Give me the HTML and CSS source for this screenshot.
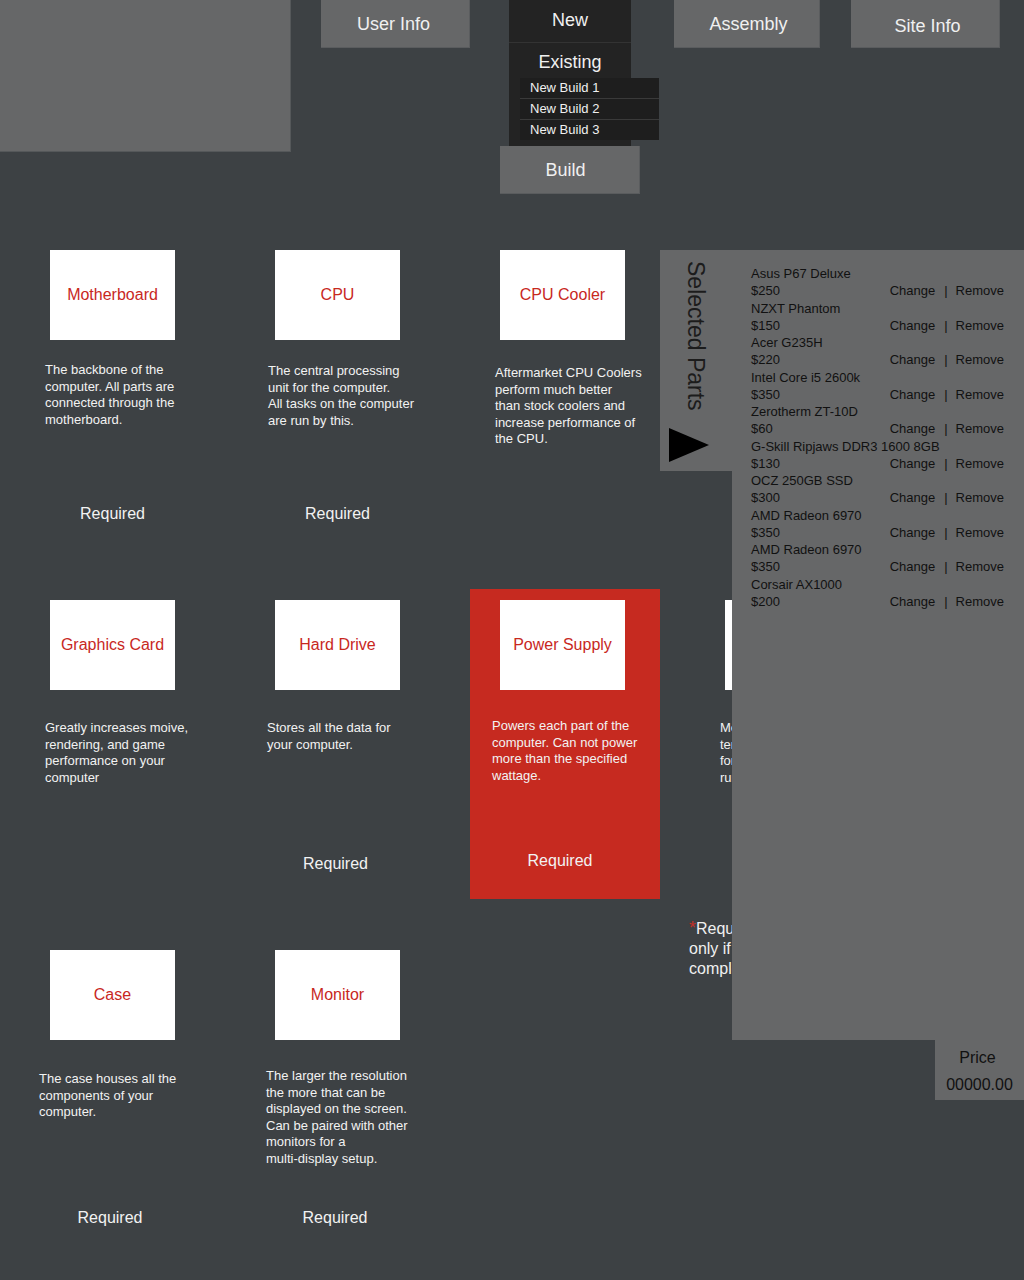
FILE: index.html
```html
<!DOCTYPE html>
<html lang="en">
<head>
<meta charset="utf-8">
<title>PC Builder</title>
<link rel="stylesheet" href="styles.css">
</head>
<body>
<header class="top">
  <div class="brand"></div>
  <div class="nav nav-user">User Info</div>
  <div class="menu">
    <div class="dd">
      <div class="dd-item dd-new">New</div>
      <div class="dd-item dd-existing">Existing</div>
      <ul class="submenu">
        <li>New Build 1</li>
        <li>New Build 2</li>
        <li>New Build 3</li>
      </ul>
    </div>
    <div class="nav nav-build">Build</div>
  </div>
  <div class="nav nav-assembly">Assembly</div>
  <div class="nav nav-site">Site Info</div>
</header>

<main class="parts-grid">
  <div class="item row1">
    <div class="tile">Motherboard</div>
    <p class="desc">The backbone of the<br>computer. All parts are<br>connected through the<br>motherboard.</p>
    <div class="req">Required</div>
  </div>
  <div class="item row1">
    <div class="tile">CPU</div>
    <p class="desc desc-b">The central processing<br>unit for the computer.<br>All tasks on the computer<br>are run by this.</p>
    <div class="req">Required</div>
  </div>
  <div class="item row1">
    <div class="tile">CPU Cooler</div>
    <p class="desc desc-c">Aftermarket CPU Coolers<br>perform much better<br>than stock coolers and<br>increase performance of<br>the CPU.</p>
  </div>
  <div class="item row1">
    <div class="tile">Optical Drive</div>
    <p class="desc">Reads and writes discs<br>for your computer.</p>
  </div>

  <div class="item">
    <div class="tile">Graphics Card</div>
    <p class="desc">Greatly increases moive,<br>rendering, and game<br>performance on your<br>computer</p>
  </div>
  <div class="item">
    <div class="tile">Hard Drive</div>
    <p class="desc desc-b">Stores all the data for<br>your computer.</p>
    <div class="req req-b">Required</div>
  </div>
  <div class="item active">
    <div class="tile">Power Supply</div>
    <p class="desc desc-red">Powers each part of the<br>computer. Can not power<br>more than the specified<br>wattage.</p>
    <div class="req req-red">Required</div>
  </div>
  <div class="item">
    <div class="tile">Memory</div>
    <p class="desc">Memory holds<br>temporary data<br>for programs<br>running now.</p>
  </div>

  <div class="item row3">
    <div class="tile">Case</div>
    <p class="desc desc-case">The case houses all the<br>components of your<br>computer.</p>
    <div class="req req-r3">Required</div>
  </div>
  <div class="item row3">
    <div class="tile">Monitor</div>
    <p class="desc desc-mon">The larger the resolution<br>the more that can be<br>displayed on the screen.<br>Can be paired with other<br>monitors for a<br>multi-display setup.</p>
    <div class="req req-r3">Required</div>
  </div>
  <p class="note"><span class="star">*</span>Required<br>only if<br>completing a build</p>
</main>

<aside class="sidebar">
  <div class="tab">
    <span class="tab-title">Selected Parts</span>
    <svg class="tab-arrow" width="40" height="34" viewBox="0 0 40 34"><polygon points="0,0 40,17 0,34" fill="#000"/></svg>
  </div>
  <div class="sidebar-col">
    <ul class="selected">
      <li><div class="p-name">Asus P67 Deluxe</div><div class="p-row"><span>$250</span><span class="p-act">Change<span class="sep">|</span>Remove</span></div></li>
      <li><div class="p-name">NZXT Phantom</div><div class="p-row"><span>$150</span><span class="p-act">Change<span class="sep">|</span>Remove</span></div></li>
      <li><div class="p-name">Acer G235H</div><div class="p-row"><span>$220</span><span class="p-act">Change<span class="sep">|</span>Remove</span></div></li>
      <li><div class="p-name">Intel Core i5 2600k</div><div class="p-row"><span>$350</span><span class="p-act">Change<span class="sep">|</span>Remove</span></div></li>
      <li><div class="p-name">Zerotherm ZT-10D</div><div class="p-row"><span>$60</span><span class="p-act">Change<span class="sep">|</span>Remove</span></div></li>
      <li><div class="p-name">G-Skill Ripjaws DDR3 1600 8GB</div><div class="p-row"><span>$130</span><span class="p-act">Change<span class="sep">|</span>Remove</span></div></li>
      <li><div class="p-name">OCZ 250GB SSD</div><div class="p-row"><span>$300</span><span class="p-act">Change<span class="sep">|</span>Remove</span></div></li>
      <li><div class="p-name">AMD Radeon 6970</div><div class="p-row"><span>$350</span><span class="p-act">Change<span class="sep">|</span>Remove</span></div></li>
      <li><div class="p-name">AMD Radeon 6970</div><div class="p-row"><span>$350</span><span class="p-act">Change<span class="sep">|</span>Remove</span></div></li>
      <li><div class="p-name">Corsair AX1000</div><div class="p-row"><span>$200</span><span class="p-act">Change<span class="sep">|</span>Remove</span></div></li>
    </ul>
    <div class="price">
      <div class="price-label">Price</div>
      <div class="price-value">00000.00</div>
    </div>
  </div>
</aside>
</body>
</html>
```

FILE: styles.css
```css
* { box-sizing: border-box; }

html, body {
  margin: 0;
  padding: 0;
}

body {
  position: relative;
  min-height: 1280px;
  background: #3d4144;
  color: #f2f2f2;
  font-family: "Liberation Sans", Arial, sans-serif;
}

/* ---------- header ---------- */
.top {
  display: flex;
  align-items: flex-start;
  height: 239px;
}

.brand {
  width: 291px;
  height: 152px;
  background: #666768;
  border-right: 1px solid #55585a;
  border-bottom: 1px solid #55585a;
}

.nav {
  height: 48px;
  background: #666768;
  color: #f0f0f0;
  font-size: 18px;
  line-height: 48px;
  text-align: center;
  border-right: 1px solid #5a5c5e;
  border-bottom: 1px solid #5a5c5e;
}

.nav-user { margin-left: 30px; width: 149px; padding-right: 3px; }

.menu {
  margin-left: 30px;
  width: 140px;
}

.dd {
  position: relative;
  width: 122px;
  height: 146px;
  margin: 0 auto;
  background: #232323;
}

.dd-item {
  color: #f0f0f0;
  font-size: 18px;
  text-align: center;
}

.dd-new {
  height: 43px;
  line-height: 40px;
  border-bottom: 1px solid #333;
}

.dd-existing {
  height: 35px;
  line-height: 38px;
}

.submenu {
  position: absolute;
  left: 11px;
  top: 78px;
  width: 139px;
  margin: 0;
  padding: 0;
  list-style: none;
  background: #1e1e1e;
}

.submenu li {
  height: 21px;
  padding-left: 10px;
  font-size: 13px;
  line-height: 20px;
  color: #f0f0f0;
  border-bottom: 1px solid #3a3a3a;
}

.submenu li:last-child {
  height: 20px;
  border-bottom: 0;
}

.nav-build { width: 140px; padding-right: 8px; }

.nav-assembly { margin-left: 34px; width: 146px; padding-left: 4px; }

.nav-site { margin-left: 31px; width: 149px; padding-left: 5px; line-height: 52px; }

/* ---------- grid ---------- */
.parts-grid {
  display: grid;
  grid-template-columns: repeat(4, 225px);
  grid-auto-rows: 310px;
  row-gap: 40px;
  margin: 0;
}

.item {
  display: flex;
  flex-direction: column;
  width: 190px;
  height: 310px;
  margin-left: 20px;
}

.item.active { background: #c62a20; }

.tile {
  display: flex;
  align-items: center;
  justify-content: center;
  width: 125px;
  height: 90px;
  margin: 11px 0 0 30px;
  background: #fff;
  color: #c8281e;
  font-size: 16px;
}

.desc {
  margin: 30px 0 0 25px;
  font-size: 13px;
  line-height: 16.6px;
  white-space: nowrap;
}

.row1 .desc { margin-top: 22px; }
.row1 .desc-b { margin-top: 23px; margin-left: 23px; }
.row1 .desc-c { margin-top: 25px; }
.desc-b { margin-left: 22px; }
.desc-red { margin-top: 28px; margin-left: 22px; }
.desc-case { margin-top: 31px; margin-left: 19px; }
.desc-mon { margin-top: 28px; margin-left: 21px; }

.req {
  margin-top: auto;
  margin-bottom: 25px;
  padding-right: 5px;
  font-size: 16px;
  line-height: 20px;
  text-align: center;
}

.req-b { padding-right: 9px; }
.req-red { margin-bottom: 28px; padding-right: 10px; }
.req-r3 { margin-bottom: 21px; padding-right: 10px; }

.note {
  grid-column: 4;
  margin: -21px 0 0 14px;
  font-size: 16px;
  line-height: 20px;
  color: #f0f0f0;
  white-space: nowrap;
}

.star { color: #c0302a; font-size: 18px; }

/* ---------- selected parts panel ---------- */
.sidebar {
  position: absolute;
  left: 660px;
  top: 250px;
  display: flex;
  align-items: flex-start;
}

.tab {
  display: flex;
  flex-direction: column;
  align-items: flex-start;
  width: 72px;
  height: 221px;
  padding: 11px 0 0 9px;
  background: #666768;
}

.tab-title {
  writing-mode: vertical-rl;
  margin-left: 14px;
  font-size: 23px;
  line-height: 26px;
  color: #1c1c1c;
}

.tab-arrow {
  display: block;
  margin-top: 17px;
}

.sidebar-col {
  display: flex;
  flex-direction: column;
  align-items: flex-end;
  width: 292px;
}

.selected {
  width: 292px;
  height: 790px;
  margin: 0;
  padding: 15px 20px 0 19px;
  list-style: none;
  background: #666768;
  color: #111;
  font-size: 13px;
  line-height: 17.25px;
}

.p-row {
  display: flex;
  justify-content: space-between;
}

.sep { padding: 0 8px 0 9px; }

.price {
  width: 89px;
  height: 60px;
  padding-top: 4px;
  background: #666768;
  color: #111;
  font-size: 16px;
  line-height: 27px;
  text-align: center;
}

.price-label { padding-right: 4px; }
```
